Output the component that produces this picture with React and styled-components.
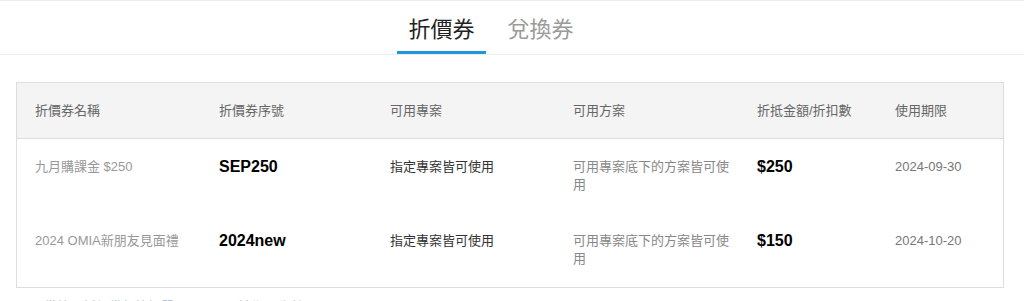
import { createGlobalStyle, styled } from "styled-components"

const GlobalStyle = createGlobalStyle`
  html, body {
    margin: 0;
    padding: 0;
    background: #fff;
    font-family: "Liberation Sans", Arial, "Noto Sans CJK TC", sans-serif;
  }
`

const Page = styled.div`
  width: 1024px;
  height: 301px;
  overflow: hidden;
  border-top: 1px solid #eeeeee;
  box-sizing: border-box;
`

const TabBar = styled.nav`
  display: flex;
  justify-content: center;
  gap: 11px;
  padding-right: 42px;
  border-bottom: 1px solid #eeeeee;
`

const Tab = styled.button`
  border: 0;
  background: none;
  padding: 11px 11px 8px;
  font-family: "Noto Sans CJK TC", "Noto Sans", sans-serif;
  font-size: 22px;
  line-height: 31px;
  color: ${(p) => (p.$active ? "#222" : "#9a9a9a")};
  border-bottom: 3px solid ${(p) => (p.$active ? "#1d9ad6" : "transparent")};
  cursor: pointer;
`

const Wrap = styled.section`
  padding: 27px 20px 0 16px;
`

const Table = styled.div`
  display: grid;
  grid-template-columns: 184px 171px 183px 184px 138px 1fr;
  border: 1px solid #dddddd;
`

const HeadCell = styled.div`
  background: #f4f4f4;
  border-bottom: 1px solid #dddddd;
  padding: 19px 8px 18px 18px;
  font-size: 13px;
  line-height: 18px;
  color: #666;
`

const Cell = styled.div`
  padding: 19px 8px 19px 18px;
  font-size: ${(p) => (p.$big ? "16px" : "13px")};
  font-weight: ${(p) => (p.$big ? 700 : 400)};
  line-height: 18px;
  color: ${(p) => p.$color || "#333"};
`

const Note = styled.p`
  margin: 10px 0 0 28px;
  font-size: 13px;
  line-height: 18px;
  color: #9fb4c4;
`

const columns = ["折價券名稱", "折價券序號", "可用專案", "可用方案", "折抵金額/折扣數", "使用期限"]

const coupons = [
  {
    name: "九月購課金 $250",
    code: "SEP250",
    project: "指定專案皆可使用",
    plan: "可用專案底下的方案皆可使用",
    amount: "$250",
    expires: "2024-09-30",
  },
  {
    name: "2024 OMIA新朋友見面禮",
    code: "2024new",
    project: "指定專案皆可使用",
    plan: "可用專案底下的方案皆可使用",
    amount: "$150",
    expires: "2024-10-20",
  },
]

export default function App() {
  return (
    <Page>
      <GlobalStyle />
      <TabBar>
        <Tab $active>折價券</Tab>
        <Tab>兌換券</Tab>
      </TabBar>
      <Wrap>
        <Table>
          {columns.map((c) => (
            <HeadCell key={c}>{c}</HeadCell>
          ))}
          {coupons.map((c) => [
            <Cell key={c.code + "n"} $color="#999">{c.name}</Cell>,
            <Cell key={c.code + "c"} $big $color="#000">{c.code}</Cell>,
            <Cell key={c.code + "p"} $color="#333">{c.project}</Cell>,
            <Cell key={c.code + "l"} $color="#888">{c.plan}</Cell>,
            <Cell key={c.code + "a"} $big $color="#000">{c.amount}</Cell>,
            <Cell key={c.code + "e"} $color="#777">{c.expires}</Cell>,
          ])}
        </Table>
        <Note>備註：折價券每筆訂單限用一張，逾期即失效</Note>
      </Wrap>
    </Page>
  )
}
